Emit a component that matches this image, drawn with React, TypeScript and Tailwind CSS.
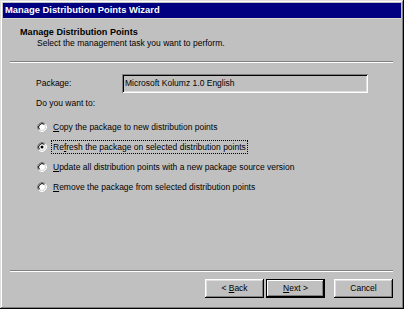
import React from "react";

const Radio = ({ checked }: { checked?: boolean }) => (
  <svg width="10" height="10" viewBox="0 0 10 10" className="shrink-0">
    <circle cx="5" cy="5" r="3.5" fill="#fff" />
    <path d="M1.82 8.18 A4.5 4.5 0 0 1 8.18 1.82" fill="none" stroke="#808080" strokeWidth="1" />
    <path d="M8.18 1.82 A4.5 4.5 0 0 1 1.82 8.18" fill="none" stroke="#ffffff" strokeWidth="1" />
    <path d="M2.53 7.47 A3.5 3.5 0 0 1 7.47 2.53" fill="none" stroke="#000" strokeWidth="1" />
    <path d="M7.47 2.53 A3.5 3.5 0 0 1 2.53 7.47" fill="none" stroke="#dfdfdf" strokeWidth="1" />
    {checked && <circle cx="5" cy="5" r="1.5" fill="#000" />}
  </svg>
);

const Sep = () => (
  <div className="ml-[7px] mr-[8px] h-[2px] border-t border-t-[#808080] border-b border-b-white" />
);

const Btn = ({ children, def }: { children: React.ReactNode; def?: boolean }) => (
  <div
    className={
      "w-[59px] h-[19px] flex items-center justify-center bg-[#c0c0c0] text-[8.5px] text-black " +
      (def
        ? "border border-black shadow-[inset_-1px_-1px_#000,inset_1px_1px_#fff,inset_-2px_-2px_#808080]"
        : "shadow-[inset_-1px_-1px_#000,inset_1px_1px_#fff,inset_-2px_-2px_#808080,inset_2px_2px_#dfdfdf]")
    }
  >
    <span className="whitespace-pre">{children}</span>
  </div>
);

export default function App() {
  const options: { pre: string; u: string; post: string; checked?: boolean }[] = [
    { pre: "", u: "C", post: "opy the package to new distribution points" },
    { pre: "Re", u: "f", post: "resh the package on selected distribution points", checked: true },
    { pre: "", u: "U", post: "pdate all distribution points with a new package source version" },
    { pre: "", u: "R", post: "emove the package from selected distribution points" },
  ];
  return (
    <div className="w-[404px] h-[309px] bg-[#c0c0c0] p-[3px] flex flex-col font-['Liberation_Sans',Arial,sans-serif] text-black shadow-[inset_-1px_-1px_#000,inset_1px_1px_#dfdfdf,inset_-2px_-2px_#808080,inset_2px_2px_#fff]">
      <div className="h-[15px] bg-[#000080] text-white font-bold text-[9.4px] flex items-center pl-[2px] whitespace-nowrap">
        Manage Distribution Points Wizard
      </div>
      <div className="h-[1px] bg-[#d8d8cc]" />
      <div className="pl-[17px] pt-[8px] text-[9.1px] font-bold leading-[11px] whitespace-nowrap">
        Manage Distribution Points
      </div>
      <div className="pl-[34px] text-[8.5px] leading-[11px] whitespace-nowrap">
        Select the management task you want to perform.
      </div>
      <div className="mt-[12px]">
        <Sep />
      </div>
      <div className="mt-[11px] flex items-center pl-[33px] text-[8.5px]">
        <div className="w-[86px]">Package:</div>
        <div className="w-[246px] h-[19px] flex items-center pl-[3px] whitespace-nowrap shadow-[inset_1px_1px_#808080,inset_-1px_-1px_#fff,inset_2px_2px_#000,inset_-2px_-2px_#dfdfdf]">
          Microsoft Kolumz 1.0 English
        </div>
      </div>
      <div className="mt-[5px] pl-[33px] text-[8.5px] leading-[11px]">Do you want to:</div>
      <div className="mt-[8px] flex flex-col pl-[34px] text-[8.5px]">
        {options.map((o, i) => (
          <div key={i} className="h-[20px] flex items-center gap-[4px]">
            <Radio checked={o.checked} />
            <span
              className={
                "px-[1px] leading-[12px] whitespace-nowrap border border-dotted " +
                (o.checked ? "border-black" : "border-transparent")
              }
            >
              {o.pre}
              <u>{o.u}</u>
              {o.post}
            </span>
          </div>
        ))}
      </div>
      <div className="flex-1" />
      <Sep />
      <div className="mt-[7px] mb-[8px] flex justify-end pr-[8px]">
        <Btn>
          {"< "}
          <u>B</u>ack
        </Btn>
        <div className="w-[2px]" />
        <Btn def>
          <u>N</u>
          {"ext >"}
        </Btn>
        <div className="w-[9px]" />
        <Btn>Cancel</Btn>
      </div>
    </div>
  );
}
